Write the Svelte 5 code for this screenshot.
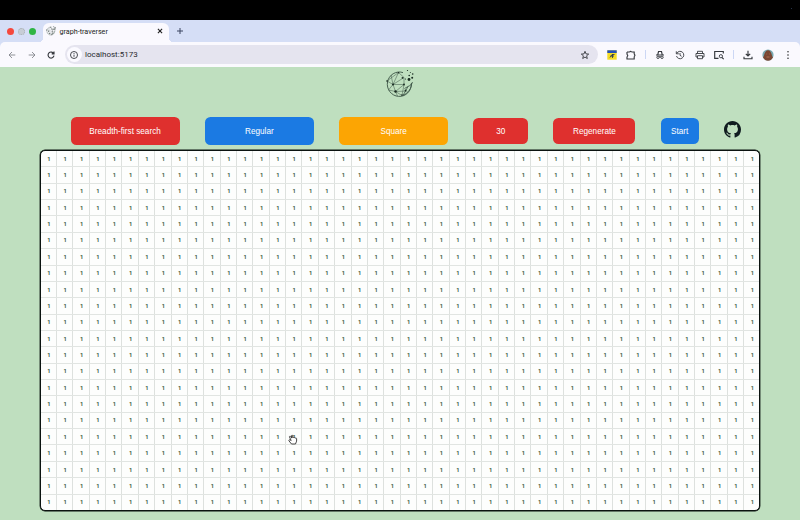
<script>
  const rows = Array.from({ length: 22 }, () => Array(44).fill(1));
  const buttons = [
    { label: 'Breadth-first search', kind: 'red wide' },
    { label: 'Regular', kind: 'blue wide' },
    { label: 'Square', kind: 'orange wide' },
    { label: '30', kind: 'red size' },
    { label: 'Regenerate', kind: 'red regen' },
    { label: 'Start', kind: 'blue start' }
  ];
</script>

{#snippet globe()}
  <g fill="none" stroke="#3a5244" stroke-width=".5">
    <path d="M18 3.600A12 12.200 0 1 0 26.300 14.500" stroke-width=".9" />
    <path d="M27.500 13c-.5 2.500-2.500 3.500-4.500 4.500l-3.500 2M26.500 14c.5 5-3.500 10-8.500 12.500l5-9" stroke-width=".8" />
    <path d="M8 15.500 13.500 3.500 19 8.500 19 15.500 8 15.500 2 12M8 15.500 3.500 21M8 15.500 10.500 22.500 19 15.500 17 26.500 10.500 22.500 3.500 21M2 12 13.500 3.500M8 15.500 19 8.500M10.500 22.500 22 22M6 6 8 15.500M10.500 22.500 12.500 27" />
  </g>
  <g fill="#182a20">
    <circle cx="8" cy="15.500" r="1" /><circle cx="19" cy="15.500" r=".9" />
    <circle cx="10.500" cy="22.500" r="1.200" /><circle cx="17.500" cy="8.800" r=".9" />
    <circle cx="13.500" cy="3.700" r=".7" /><circle cx="2" cy="12" r=".8" />
    <circle cx="17" cy="26" r=".8" /><circle cx="20.500" cy="21.500" r=".9" />
    <circle cx="24" cy="10.500" r="1.400" /><circle cx="27.200" cy="8.800" r="1" />
    <circle cx="24.200" cy="6.500" r=".8" /><circle cx="27.700" cy="5" r=".8" />
    <circle cx="25.300" cy="3.500" r=".5" /><circle cx="22.500" cy="1.500" r=".6" />
    <circle cx="20.500" cy="10" r=".6" />
  </g>
{/snippet}

<div class="screen">
  <div class="menubar"><i></i></div>

  <div class="tabs">
    <i class="light close"></i><i class="light min"></i><i class="light max"></i>
    <div class="tab">
      <svg class="favicon" width="10" height="10" viewBox="0 0 30 30"><g stroke="#45504a" stroke-width="1.500">{@render globe()}</g></svg>
      <span>graph-traverser</span>
      <svg width="6" height="6" viewBox="0 0 6 6"><path d="M.9.9l4.200 4.200M5.100.9.9 5.100" stroke="#222" stroke-width="1.100" /></svg>
    </div>
    <svg class="plus" width="8" height="8" viewBox="0 0 8 8"><path d="M4 1v6M1 4h6" stroke="#3b4560" stroke-width="1" /></svg>
  </div>

  <div class="toolbar">
    <div class="nav">
      <svg viewBox="0 0 10 10"><path class="dim" d="M8.300 5H2M5 2 2 5l3 3" /></svg>
      <svg viewBox="0 0 10 10"><path class="dim" d="M1.700 5H8M5 2l3 3-3 3" /></svg>
      <svg viewBox="0 0 10 10"><path class="bold" d="M7.700 3.600A3 3 0 1 0 8 5.700M8 1.600v2.300H5.700" /></svg>
    </div>
    <div class="address">
      <span class="info"><svg viewBox="0 0 10 10"><circle cx="5" cy="5" r="3.500" /><path d="M5 4.600v2.200M5 3v.9" /></svg></span>
      <span class="url">localhost:5173</span>
      <svg viewBox="0 0 10 10"><path d="M5 1.300 6 3.900l2.700.2-2.100 1.700.7 2.700L5 7.100 2.700 8.500l.7-2.700L1.300 4.100 4 3.900z" /></svg>
    </div>
    <div class="tools">
      <span><svg viewBox="0 0 10 10"><path d="M.3.3h9.400v9.400H.3z" fill="#f4dc24" stroke="none" /><path d="M.3.300h9.400v2.700H.3z" fill="#2450b8" stroke="none" /><path d="M3 7.500 5 4.500h2.500M3.500 6h3.500M5.500 4v4" stroke="#303b50" /></svg></span>
      <span><svg viewBox="0 0 10 10"><path class="bold" d="M1 2h2.700M5.500 2H8.200v2.200M8.200 6.500V9H1V6.800M1 4.400V2M3.700 2q.9-1.400 1.800 0M8.200 4.200q1.500 1.100 0 2.300M1 4.400q1.500 1.200 0 2.400" /></svg></span>
      <i class="sep"></i>
      <span><svg viewBox="0 0 10 10"><path class="bold" d="M1 5h8M2.800 4.600 3.500 1.500h3l.7 3.100M4.200 7.100q.8-.5 1.600 0" /><circle cx="3" cy="7.300" r="1.200" /><circle cx="7" cy="7.300" r="1.200" /></svg></span>
      <span><svg viewBox="0 0 10 10"><path d="M1.700 3.500A3.700 3.700 0 1 1 1.500 6M1.300 1.300v2.500h2.500M5 3v2.300l1.600 1" /></svg></span>
      <span><svg viewBox="0 0 10 10"><path d="M2.500 3.300V1.300h5v2M2.500 7H1V3.500h8V7H7.500M2.500 5.700h5v3h-5z" /></svg></span>
      <span><svg viewBox="0 0 10 10"><path class="bold" d="M4.500 8.300H.7V1.500h8.600v2M8 7.500l1.700 1.700" /><circle cx="6.900" cy="6.200" r="1.600" /></svg></span>
      <i class="sep"></i>
      <span><svg viewBox="0 0 10 10"><path class="bold" d="M5 .8v5M2.800 3.800 5 6 7.200 3.800M1 6.700v2h8v-2" /></svg></span>
      <span><svg class="avatar" viewBox="0 0 12 12"><circle cx="6" cy="6" r="5.600" fill="#78a9b1" stroke="none" /><path d="M1 8.500C2.500 7 2.400 1.500 6 1.300S9.500 7 11 8.500Q9 12 6 11.600 3 12 1 8.500z" fill="#7a4733" stroke="none" /><path d="M4.500 5h.6M7 5h.6M4.500 8h3" stroke="#b57555" /></svg></span>
      <span><svg viewBox="0 0 10 10"><g fill="#333" stroke="none"><circle cx="5" cy="1.700" r=".8" /><circle cx="5" cy="5" r=".8" /><circle cx="5" cy="8.300" r=".8" /></g></svg></span>
    </div>
  </div>

  <main>
    <svg class="logo" width="30" height="30" viewBox="0 0 30 30">{@render globe()}</svg>
    <div class="controls">
      {#each buttons as b}
        <button class={b.kind}>{b.label}</button>
      {/each}
      <svg class="github" width="17" height="17" viewBox="0 0 16 16"><path fill="#101c20" d="M8 0C3.580 0 0 3.580 0 8c0 3.540 2.290 6.530 5.470 7.590.4.070.55-.17.55-.38 0-.19-.01-.82-.01-1.490-2.010.37-2.530-.49-2.690-.94-.09-.23-.48-.94-.82-1.130-.28-.15-.68-.52-.01-.53.63-.01 1.080.58 1.230.82.72 1.210 1.870.87 2.330.66.07-.52.28-.87.51-1.070-1.780-.2-3.640-.89-3.640-3.950 0-.87.31-1.590.82-2.150-.08-.2-.36-1.020.08-2.120 0 0 .67-.21 2.200.82.640-.18 1.320-.27 2-.27s1.360.09 2 .27c1.530-1.040 2.200-.82 2.200-.82.440 1.100.160 1.920.080 2.120.510.560.820 1.270.820 2.150 0 3.070-1.870 3.750-3.650 3.950.290.250.540.730.540 1.480 0 1.070-.010 1.930-.010 2.200 0 .210.150.460.550.380A8.010 8.010 0 0 0 16 8c0-4.420-3.580-8-8-8z" /></svg>
    </div>
    <div class="board">
      {#each rows as row}
        <div class="row">
          {#each row as weight}<div class="cell">{weight}</div>{/each}
        </div>
      {/each}
      <svg class="pointer" width="10" height="11" viewBox="0 0 10 11"><path d="M3.200 6.500 1.500 3.200c-.4-1 .8-1.400 1.300-.5l.7 1.400V1.800c0-.8 1.200-.8 1.200 0v2c.2-.7 1.300-.5 1.300.1.300-.5 1.300-.3 1.300.3.500-.5 1.300-.2 1.300.5v2.400L7.500 10h-4L1 6.900c-.6-.9.500-1.500 1.200-.9z" fill="#fff" stroke="#333" stroke-width=".9" /></svg>
    </div>
  </main>
</div>

<style>
  .screen { width: 800px; height: 520px; overflow: hidden; background: #bfdfbf; font-family: "Liberation Sans", Arial, sans-serif; display: flex; flex-direction: column; }
  .screen * { box-sizing: border-box; }
  svg { display: block; flex: none; }

  .menubar { height: 20px; flex: none; background: #000; display: flex; justify-content: flex-end; padding: 8px 8px 0 0; }
  .menubar i { width: 1px; height: 1px; background: #26334a; }

  .tabs { height: 22px; flex: none; background: #d5def6; display: flex; align-items: center; padding-left: 7px; }
  .light { width: 7px; height: 7px; border-radius: 50%; margin-right: 4px; }
  .close { background: #f5483e; }
  .min { background: #c7cdd6; border: 1px dotted #a5afb5; }
  .max { background: #2fb544; }
  .tab { position: relative; width: 126px; height: 19px; margin-top: 3px; margin-left: 3px; background: #faf9fe; border-radius: 6px 6px 0 0; display: flex; align-items: center; padding: 0 6px 3px 3px; font: 7.200px Roboto, sans-serif; color: #1b1d21; }
  .tab::before, .tab::after { content: ''; position: absolute; bottom: 0; width: 4px; height: 4px; }
  .tab::before { left: -4px; background: radial-gradient(circle at 0 0, transparent 4px, #faf9fe 4.300px); }
  .tab::after { right: -4px; background: radial-gradient(circle at 100% 0, transparent 4px, #faf9fe 4.300px); }
  .tab span { margin: 0 auto 0 3.500px; }
  .favicon { opacity: .8; }
  .plus { margin-left: 6.500px; }

  .toolbar { height: 25px; flex: none; background: #faf9fe; display: flex; align-items: center; border-radius: 5px 5px 0 0; box-shadow: 0 -5px 0 0 #d5def6; padding-left: 7px; }
  .toolbar svg { width: 10px; height: 10px; fill: none; stroke: #35383d; stroke-width: .9; }
  .nav { display: flex; gap: 9.600px; width: 57.500px; }
  .nav .dim { stroke: #85878d; }
  .toolbar .bold { stroke-width: 1.150; }
  .address { width: 533.500px; height: 19px; border-radius: 10px; background: #e5e4ef; display: flex; align-items: center; padding: 0 8px 0 2px; }
  .info { width: 15px; height: 15px; border-radius: 50%; background: #fbfaff; display: grid; place-items: center; }
  .url { flex: 1; padding-left: 3.500px; font: 8px Roboto, sans-serif; color: #292b30; }
  .tools { display: flex; align-items: center; margin-left: 3.900px; }
  .tools span { width: 19.600px; display: flex; justify-content: center; }
  .sep { width: 9.600px; height: 9px; background: linear-gradient(#ccd7f4, #ccd7f4) center / 1px 100% no-repeat; }
  .toolbar .avatar { width: 12px; height: 12px; }

  main { flex: 1; display: flex; flex-direction: column; }
  .logo { margin: 2px 0 0 385px; }
  .controls { display: flex; align-items: center; height: 28px; margin-top: 18px; padding-left: 70.500px; gap: 25.100px; }
  button { height: 26px; padding: 0; border: 0; border-radius: 5.500px; color: #fff; font: 8.200px "Liberation Sans", Arial, sans-serif; text-align: center; flex: none; }
  .wide { width: 109.200px; height: 27.500px; }
  .size { width: 55px; }
  .regen { width: 82px; }
  .start { width: 38.300px; }
  .red { background: #df302e; }
  .blue { background: #1b7ae3; }
  .orange { background: #fca503; }
  .github { margin-bottom: 3px; }

  .board { position: relative; width: 720.500px; height: 361px; margin: 5px 0 0 39.700px; border: 1px solid #0b1310; box-shadow: 0 0 0 .4px #0b1310; border-radius: 5px; background: #fdfefd; overflow: hidden; display: flex; flex-direction: column; }
  .row { flex: 1; display: flex; border-bottom: 1px solid #e1e5e2; min-height: 0; }
  .row:nth-of-type(22) { border-bottom: 0; }
  .cell { flex: 1; min-width: 0; border-right: 1px solid #dde1de; display: flex; align-items: center; justify-content: center; padding-left: 1px; font: bold 5.800px/6px Roboto, sans-serif; color: #3f6247; }
  .cell:last-child { border-right: 0; }
  .pointer { position: absolute; left: 247px; top: 282.500px; }
</style>
